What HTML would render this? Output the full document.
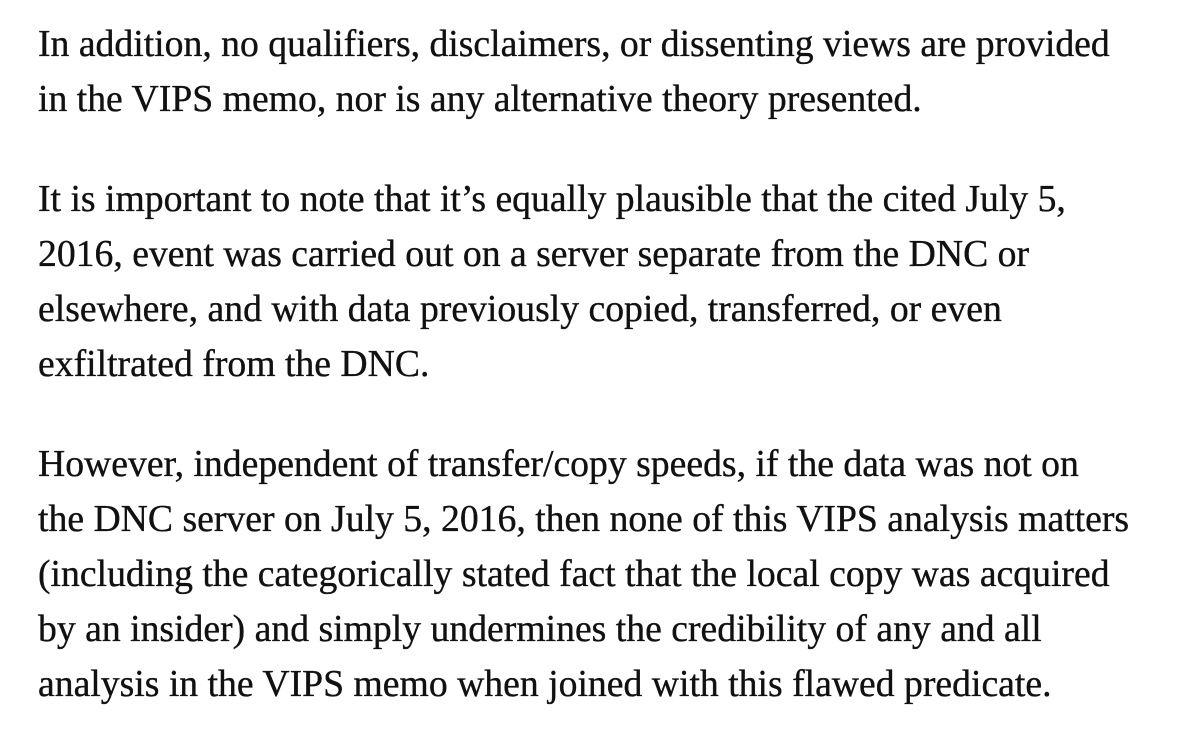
<!DOCTYPE html>
<html><head><meta charset="utf-8"><style>
html,body{margin:0;padding:0;background:#fff;width:1200px;height:752px;overflow:hidden}
body{font-family:"Liberation Serif",serif;font-size:37.7px;color:#111;line-height:55px;-webkit-text-stroke:0.35px #111}
.l{position:absolute;left:38px;white-space:nowrap}
</style></head><body>
<div class="l" style="top:17px">In addition, no qualifiers, disclaimers, or dissenting views are provided</div>
<div class="l" style="top:72px">in the VIPS memo, nor is any alternative theory presented.</div>
<div class="l" style="top:172px">It is important to note that it’s equally plausible that the cited July 5,</div>
<div class="l" style="top:227px">2016, event was carried out on a server separate from the DNC or</div>
<div class="l" style="top:282px">elsewhere, and with data previously copied, transferred, or even</div>
<div class="l" style="top:337px">exfiltrated from the DNC.</div>
<div class="l" style="top:437px">However, independent of transfer/copy speeds, if the data was not on</div>
<div class="l" style="top:492px">the DNC server on July 5, 2016, then none of this VIPS analysis matters</div>
<div class="l" style="top:547px">(including the categorically stated fact that the local copy was acquired</div>
<div class="l" style="top:602px">by an insider) and simply undermines the credibility of any and all</div>
<div class="l" style="top:657px">analysis in the VIPS memo when joined with this flawed predicate.</div>
</body></html>
